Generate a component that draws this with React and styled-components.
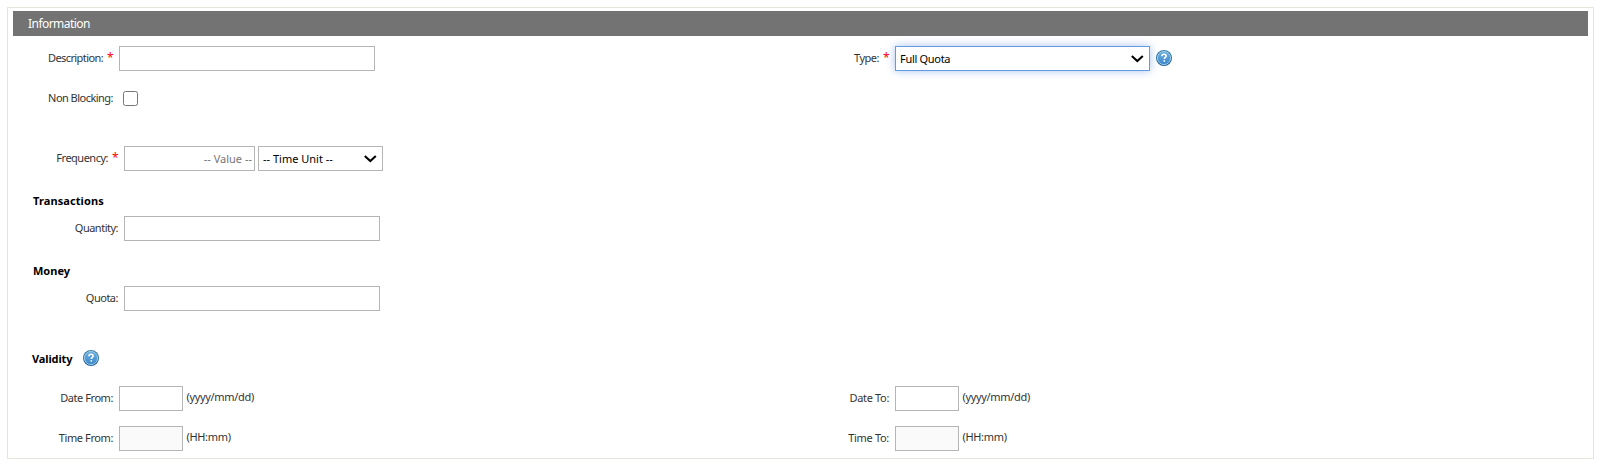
import React from "react";
import styled, { createGlobalStyle } from "styled-components";

const Global = createGlobalStyle`
  *, *::before, *::after { box-sizing: border-box; }
  body {
    margin: 0;
    background: #fff;
    color: #333;
    font: 11px/14px Tahoma, "Noto Sans", sans-serif;
  }
`;

const Panel = styled.main`
  width: 1587px;
  height: 452px;
  margin: 7px 0 0 7px;
  padding: 3px 5px;
  border: 1px solid #e6e5db;
`;

const Header = styled.header`
  display: flex;
  align-items: center;
  height: 25px;
  padding-left: 15px;
  background: #737373;
  color: #fff;
  font-size: 12px;
`;

const Form = styled.form`
  display: flex;
  flex-direction: column;
`;

const Row = styled.div`
  display: grid;
  grid-template-columns: 776px 1fr;
  height: 25px;
  margin-top: ${(p) => p.$top}px;
`;

const Field = styled.div`
  display: flex;
  align-items: center;
`;

const LabelBox = styled.label`
  display: flex;
  justify-content: flex-end;
  gap: 4px;
  flex: none;
  width: ${(p) => (p.$indent ? 105 : 100)}px;
  margin-right: 6px;
  padding-bottom: 1px;
  white-space: nowrap;
`;

const Spaced = styled.span`
  letter-spacing: ${(p) => p.$spacing || 0}px;
  white-space: nowrap;
`;

const Required = styled.span`
  width: 6px;
  color: #f00;
  font-size: 12px;
`;

const Input = styled.input`
  width: ${(p) => p.$width}px;
  height: 25px;
  margin: 0;
  padding: 0 2px;
  border: 1px solid #b5b5b5;
  border-radius: 0;
  outline: none;
  background: ${(p) => (p.disabled ? "#fafafa" : "#fff")};
  font: inherit;
  text-align: ${(p) => p.$align || "left"};
  &::placeholder { color: #757575; opacity: 1; }
`;

const Checkbox = styled.input`
  appearance: none;
  width: 15px;
  height: 15px;
  margin: 0 0 0 4px;
  border: 1px solid #767676;
  border-radius: 2.5px;
  background: #fff;
`;

const SelectBox = styled.div`
  display: flex;
  align-items: center;
  justify-content: space-between;
  width: ${(p) => p.$width}px;
  height: 25px;
  margin-left: ${(p) => p.$left || 0}px;
  padding: 1px 5px 0 4px;
  border: 1px solid ${(p) => (p.$focused ? "#6699e4" : "#b5b5b5")};
  box-shadow: ${(p) => (p.$focused ? "0 0 8px rgba(82, 140, 224, 0.5)" : "none")};
  background: #fff;
  color: #000;
`;

const Hint = styled.span`
  margin-left: 3.5px;
  padding-bottom: 3px;
  letter-spacing: -0.33px;
`;

const Heading = styled.h2`
  display: flex;
  align-items: center;
  gap: 11px;
  height: 16px;
  margin: ${(p) => p.$top}px 0 0 ${(p) => p.$left}px;
  color: #000;
  font: bold 11px/16px Tahoma, "Noto Sans", sans-serif;
`;

const HeadingText = styled(Spaced)`
  padding-top: ${(p) => p.$drop || 0}px;
`;

const HelpSvg = styled.svg`
  flex: none;
  width: 16px;
  height: 16px;
  margin: 0 0 ${(p) => p.$lift || 0}px ${(p) => p.$left || 0}px;
`;

function Label({ text, spacing, required, indent }) {
  return (
    <LabelBox $indent={indent}>
      <Spaced $spacing={spacing}>{text}</Spaced>
      {required && <Required>*</Required>}
    </LabelBox>
  );
}

function Select({ value, spacing, ...box }) {
  return (
    <SelectBox {...box}>
      <Spaced $spacing={spacing}>{value}</Spaced>
      <svg width="14" height="8" viewBox="0 0 14 8" fill="none">
        <path d="M1.800 1 7.300 6l5.500-5" stroke="#000" strokeWidth="2.100" />
      </svg>
    </SelectBox>
  );
}

function Help({ left, lift }) {
  return (
    <HelpSvg $left={left} $lift={lift} viewBox="0 0 16 16" fill="none">
      <defs>
        <linearGradient id="help-rim" x1="0" y1="0" x2="0" y2="1">
          <stop offset="0" stopColor="#3f83ab" />
          <stop offset="1" stopColor="#1f5f96" />
        </linearGradient>
        <linearGradient id="help-face" x1="0" y1="0" x2="0" y2="1">
          <stop offset="0" stopColor="#6fb0dd" />
          <stop offset="1" stopColor="#3c86cb" />
        </linearGradient>
      </defs>
      <circle cx="8" cy="8" r="8" fill="url(#help-rim)" />
      <circle cx="8" cy="8" r="6.600" fill="url(#help-face)" stroke="#a5d3ec" strokeWidth=".9" />
      <path d="M5.900 6.300C5.900 4.900 6.800 4.200 8.100 4.200c1.200 0 2.100.7 2.100 1.800 0 1.400-1.900 1.500-1.900 3" stroke="#fff" strokeWidth="1.500" />
      <path d="M7.500 10.200h1.600v1.500H7.500z" fill="#fff" />
    </HelpSvg>
  );
}

export default function App() {
  return (
    <>
      <Global />
      <Panel>
        <Header><Spaced $spacing={-0.55}>Information</Spaced></Header>
        <Form>
          <Row $top={10}>
            <Field>
              <Label text="Description:" spacing={-0.6} required />
              <Input $width={256} />
            </Field>
            <Field>
              <Label text="Type:" spacing={-0.5} required />
              <Select value="Full Quota" spacing={-0.3} $width={255} $focused />
              <Help left={6} lift={1} />
            </Field>
          </Row>
          <Row $top={15}>
            <Field>
              <Label text="Non Blocking:" spacing={-0.53} />
              <Checkbox type="checkbox" />
            </Field>
          </Row>
          <Row $top={35}>
            <Field>
              <Label text="Frequency:" spacing={-0.5} required indent />
              <Input $width={131} $align="right" placeholder="-- Value --" />
              <Select value="-- Time Unit --" $width={125} $left={3} />
            </Field>
          </Row>
          <Heading $top={22} $left={20}><Spaced $spacing={0.1}>Transactions</Spaced></Heading>
          <Row $top={7}>
            <Field>
              <Label text="Quantity:" spacing={-0.5} indent />
              <Input $width={256} />
            </Field>
          </Row>
          <Heading $top={22} $left={20}><Spaced>Money</Spaced></Heading>
          <Row $top={7}>
            <Field>
              <Label text="Quota:" spacing={-0.5} indent />
              <Input $width={256} />
            </Field>
          </Row>
          <Heading $top={39} $left={19}>
            <HeadingText $spacing={-0.12} $drop={2}>Validity</HeadingText>
            <Help />
          </Heading>
          <Row $top={20}>
            <Field>
              <Label text="Date From:" spacing={-0.43} />
              <Input $width={64} />
              <Hint>(yyyy/mm/dd)</Hint>
            </Field>
            <Field>
              <Label text="Date To:" spacing={-0.35} />
              <Input $width={64} />
              <Hint>(yyyy/mm/dd)</Hint>
            </Field>
          </Row>
          <Row $top={15}>
            <Field>
              <Label text="Time From:" spacing={-0.4} />
              <Input $width={64} disabled />
              <Hint>(HH:mm)</Hint>
            </Field>
            <Field>
              <Label text="Time To:" spacing={-0.3} />
              <Input $width={64} disabled />
              <Hint>(HH:mm)</Hint>
            </Field>
          </Row>
        </Form>
      </Panel>
    </>
  );
}
